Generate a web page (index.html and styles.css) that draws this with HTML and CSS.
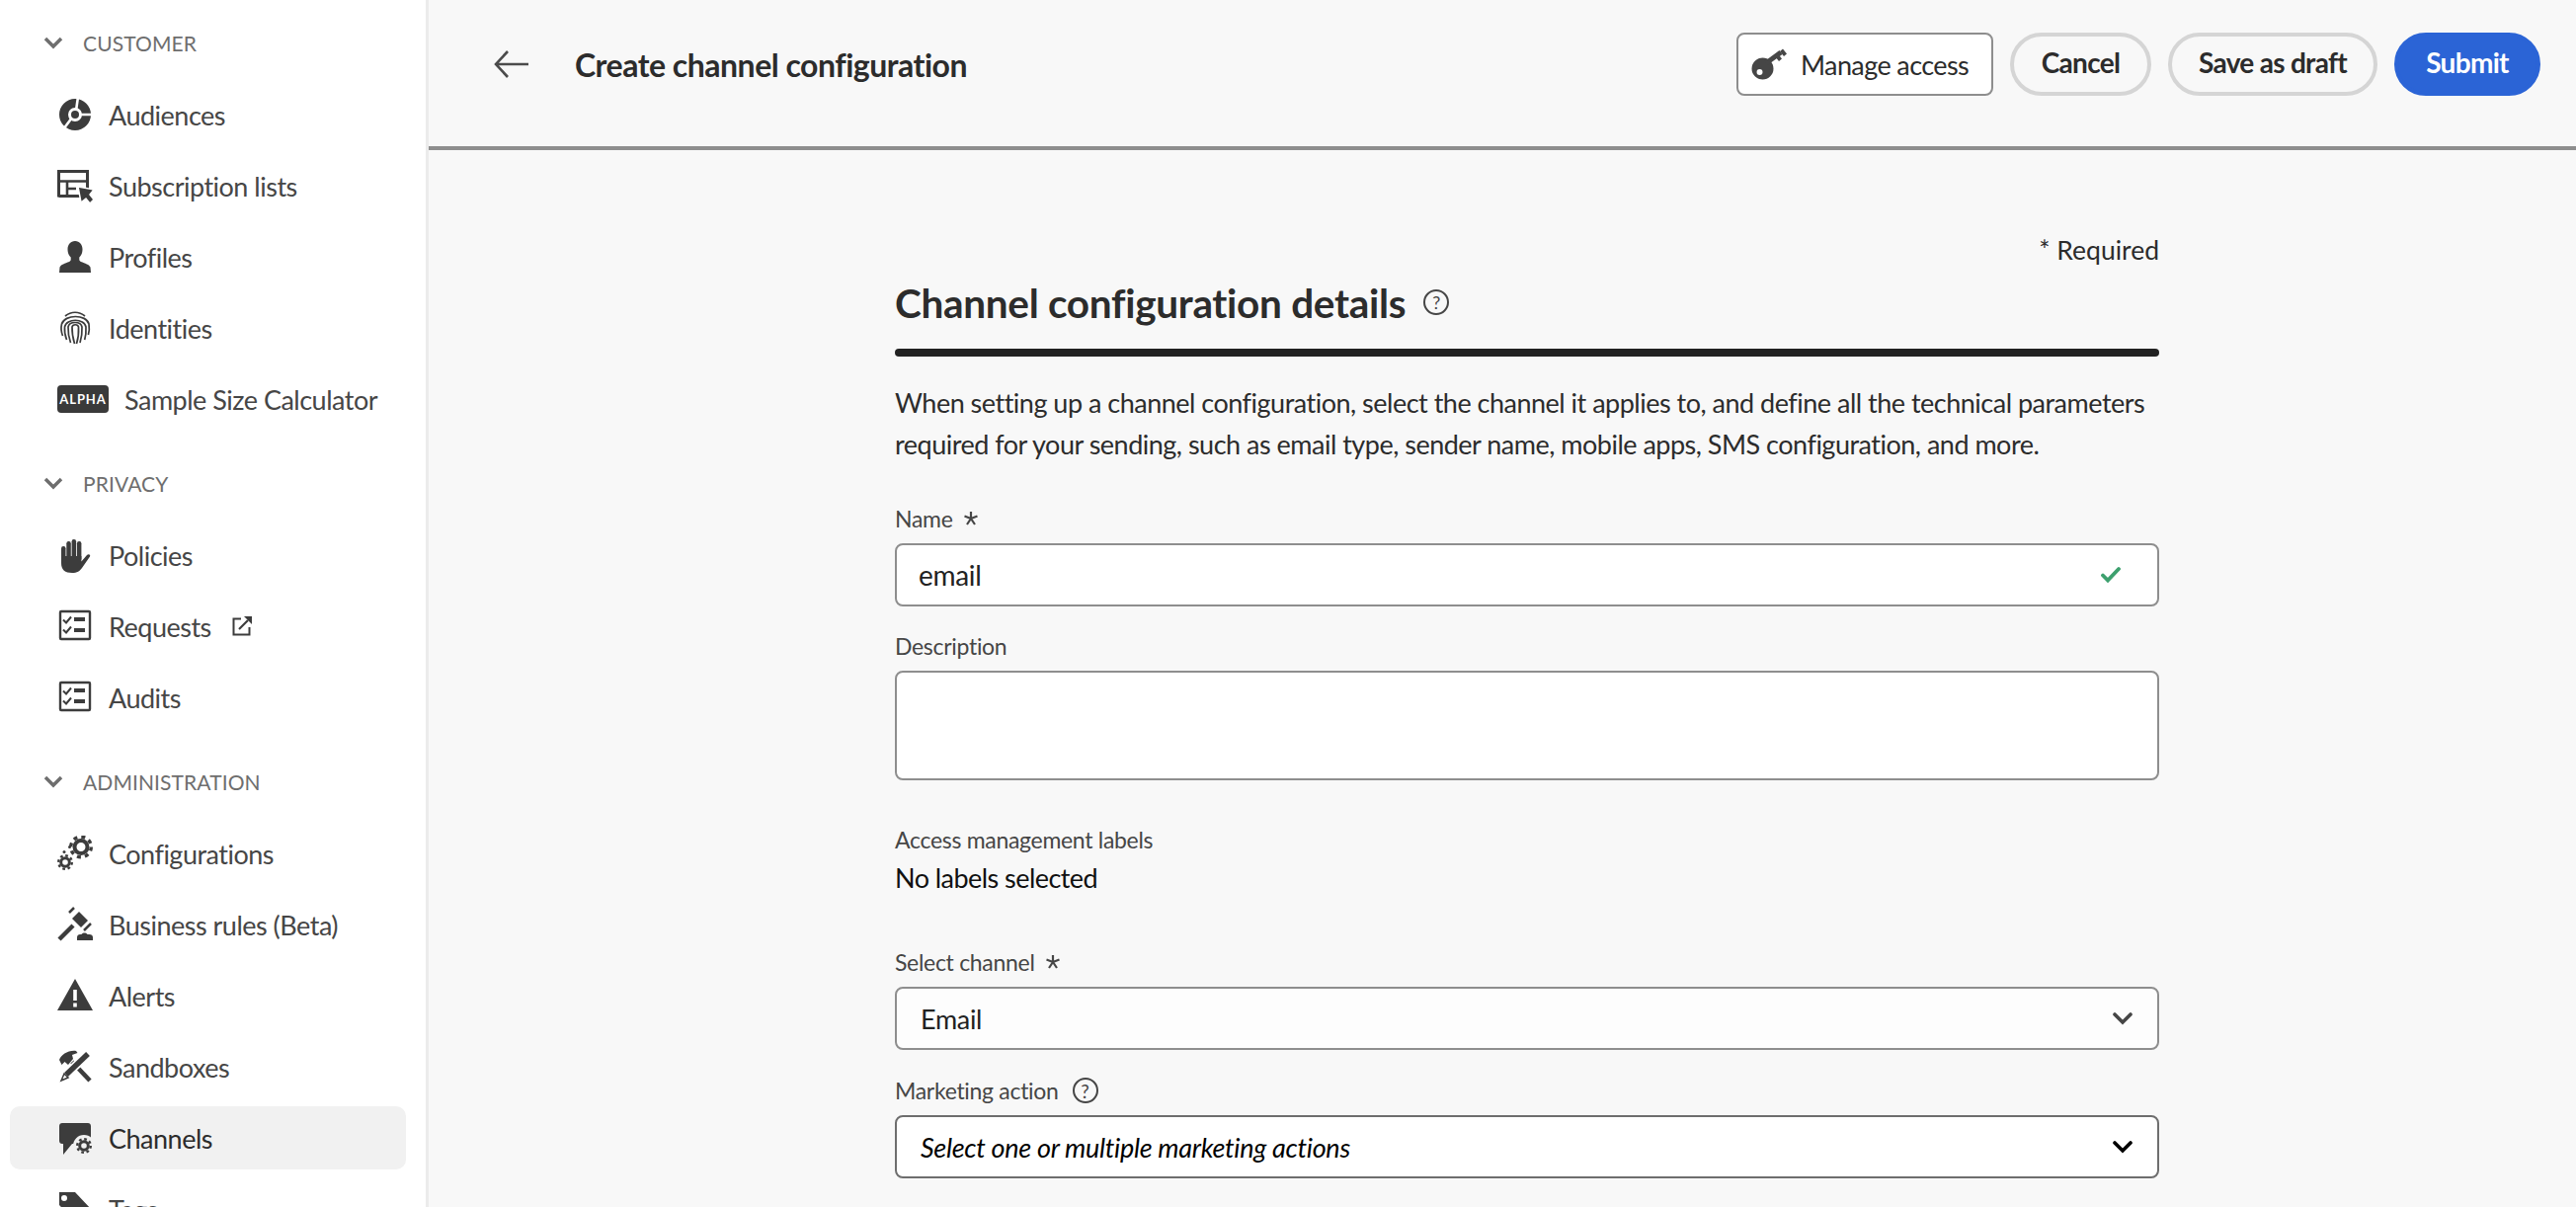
FILE: index.html
```html
<!DOCTYPE html>
<html lang="en">
<head>
  <meta charset="UTF-8">
  <title>Create channel configuration</title>
  <link rel="stylesheet" href="styles.css">
</head>
<body>
  <nav class="sidebar">
    <section class="nav-group">
      <div class="nav-title">
        <svg class="chevron" viewBox="0 0 20 14"><path d="M2 3l8 8 8-8"/></svg>
        <span>CUSTOMER</span>
      </div>
      <a class="nav-item">
        <svg class="nav-icon" viewBox="0 0 36 36">
          <circle cx="18" cy="18" r="11.5" fill="none" stroke="#3c3c3c" stroke-width="9"/>
          <path d="M19 14L21 0M22 18H36M15 21L6 33" stroke="#fff" stroke-width="2.6" fill="none"/>
          <circle cx="18" cy="18" r="4"/>
        </svg>
        <span>Audiences</span>
      </a>
      <a class="nav-item">
        <svg class="nav-icon" viewBox="0 0 36 36">
          <path d="M1.5 29.5V3.5h29v25h-29z" fill="none" stroke="#3c3c3c" stroke-width="3"/>
          <path d="M2 13.5h28M10 14v14M10 21h9" fill="none" stroke="#3c3c3c" stroke-width="2.6"/>
          <path d="M21 19l16 3-4 5 4 5-4 4-4-5-5 4z" stroke="#fff" stroke-width="1.5"/>
        </svg>
        <span>Subscription lists</span>
      </a>
      <a class="nav-item">
        <svg class="nav-icon" viewBox="0 0 36 36">
          <path d="M18 2c-4.6 0-7.5 3.6-7.5 8.6 0 3.3 1.3 6.2 3.2 8v2.2c0 1-.6 1.7-1.6 2.1-4.3 1.6-8.6 2.9-9.6 5.6L2 34h32l-.5-5.500c-1-2.700-5.300-4-9.600-5.600-1-.4-1.600-1.100-1.600-2.100v-2.200c1.900-1.800 3.200-4.700 3.200-8C25.500 5.600 22.600 2 18 2z"/>
        </svg>
        <span>Profiles</span>
      </a>
      <a class="nav-item">
        <svg class="nav-icon print" viewBox="0 0 36 36">
          <path d="M8 6c6-5 14-5 20 0"/>
          <path d="M5.500 26c-1.500-4-2-8-1-12 3-10 25-10 27.500 0 .6 4 .3 8-.6 11"/>
          <path d="M9.500 30c-1.500-4-2.500-8-2-13 1.500-9 20-9 21.500 0 .3 5-.2 9-1.300 13"/>
          <path d="M13.500 33c-1.500-4-2.700-10-2.500-16 1-6 13-6 14 0 .3 6-.4 11-2 16"/>
          <path d="M17.500 34c-1.500-5-2.700-11-2.500-17 .5-3 6-3 6.500 0 .3 6-.4 12-2 17"/>
        </svg>
        <span>Identities</span>
      </a>
      <a class="nav-item">
        <span class="badge">ALPHA</span>
        <span>Sample Size Calculator</span>
      </a>
    </section>

    <section class="nav-group">
      <div class="nav-title">
        <svg class="chevron" viewBox="0 0 20 14"><path d="M2 3l8 8 8-8"/></svg>
        <span>PRIVACY</span>
      </div>
      <a class="nav-item">
        <svg class="nav-icon" viewBox="0 0 36 36">
          <rect x="4" y="9" width="4.500" height="16" rx="2.200"/>
          <rect x="9.300" y="4" width="4.500" height="18" rx="2.200"/>
          <rect x="14.600" y="2" width="4.500" height="20" rx="2.200"/>
          <rect x="19.900" y="4" width="4.500" height="20" rx="2.200"/>
          <path d="M4 19h20.400v5.500l5.600-6.500c1.500-1.500 4-.5 3 1.500L25 31c-2 3-5 5-10 5-7 0-11-3-11-10z"/>
        </svg>
        <span>Policies</span>
      </a>
      <a class="nav-item">
        <svg class="nav-icon" viewBox="0 0 36 36">
          <rect x="3" y="3" width="30" height="28" rx="1" fill="none" stroke="#3c3c3c" stroke-width="2.400"/>
          <path d="M6 11.500l3 3 5-6M6 21.500l3 3 5-6" fill="none" stroke="#3c3c3c" stroke-width="2"/>
          <rect x="17" y="9" width="11" height="4"/>
          <rect x="17" y="20" width="11" height="4"/>
        </svg>
        <span>Requests</span>
        <svg class="external" viewBox="0 0 20 20">
          <path d="M9 2.500H1.500v16h16V11" fill="none" stroke="#3c3c3c" stroke-width="2"/>
          <path d="M7 13L16 4" fill="none" stroke="#3c3c3c" stroke-width="2.200"/>
          <path d="M12 0h8v8z"/>
        </svg>
      </a>
      <a class="nav-item">
        <svg class="nav-icon" viewBox="0 0 36 36">
          <rect x="3" y="3" width="30" height="28" rx="1" fill="none" stroke="#3c3c3c" stroke-width="2.400"/>
          <path d="M6 11.500l3 3 5-6M6 21.500l3 3 5-6" fill="none" stroke="#3c3c3c" stroke-width="2"/>
          <rect x="17" y="9" width="11" height="4"/>
          <rect x="17" y="20" width="11" height="4"/>
        </svg>
        <span>Audits</span>
      </a>
    </section>

    <section class="nav-group">
      <div class="nav-title">
        <svg class="chevron" viewBox="0 0 20 14"><path d="M2 3l8 8 8-8"/></svg>
        <span>ADMINISTRATION</span>
      </div>
      <a class="nav-item">
        <svg class="nav-icon" viewBox="0 0 36 36">
          <g fill="none" stroke="#3c3c3c">
            <circle cx="24" cy="11.500" r="6.500" stroke-width="4"/>
            <circle cx="24" cy="11.500" r="10.300" stroke-width="3.400" stroke-dasharray="4 4.090"/>
            <circle cx="8" cy="27" r="4.300" stroke-width="3"/>
            <circle cx="8" cy="27" r="6.800" stroke-width="2.400" stroke-dasharray="2.700 2.640"/>
          </g>
          <circle cx="7" cy="16.500" r="1.500"/>
          <circle cx="12.500" cy="11.500" r="1.500"/>
        </svg>
        <span>Configurations</span>
      </a>
      <a class="nav-item">
        <svg class="nav-icon" viewBox="0 0 36 36">
          <path d="M2 33l14-14" fill="none" stroke="#3c3c3c" stroke-width="4.500"/>
          <path d="M15 12l7-7 9 9-7 7z"/>
          <path d="M12 6l5-5M27 24l7-7" fill="none" stroke="#3c3c3c" stroke-width="2.500"/>
          <path d="M20 34v-3c0-2 1.500-3 3-3h1.500c1-2 5-2 6 0h2c2 0 3.500 1 3.500 3v3z"/>
        </svg>
        <span>Business rules (Beta)</span>
      </a>
      <a class="nav-item">
        <svg class="nav-icon" viewBox="0 0 36 36">
          <path d="M18 1l18 32H0z"/>
          <rect x="16.200" y="12" width="3.600" height="11" fill="#fff"/>
          <rect x="16.200" y="25.500" width="3.600" height="4" fill="#fff"/>
        </svg>
        <span>Alerts</span>
      </a>
      <a class="nav-item">
        <svg class="nav-icon" viewBox="0 0 36 36">
          <path d="M15 13l18 19" fill="none" stroke="#3c3c3c" stroke-width="4.500"/>
          <path d="M2 11c2-5 9-10 17-9l1.500 2-5.500 2 1 4-5 6-3.500-3-3 3z"/>
          <path d="M8 27L31 5" fill="none" stroke="#fff" stroke-width="9"/>
          <path d="M9 26L31 5" fill="none" stroke="#3c3c3c" stroke-width="5.500"/>
          <path d="M7 25l4 4-7 3z" fill="#fff" stroke="#3c3c3c" stroke-width="1.500"/>
        </svg>
        <span>Sandboxes</span>
      </a>
      <a class="nav-item active">
        <svg class="nav-icon" viewBox="0 0 36 36">
          <path d="M5 3h26c1.700 0 3 1.300 3 3v18H15l-9 11v-11H5c-1.700 0-3-1.300-3-3V6c0-1.700 1.300-3 3-3z"/>
          <circle cx="27" cy="26" r="11" fill="#f1f1f1"/>
          <g fill="none" stroke="#3c3c3c">
            <circle cx="27" cy="26" r="4.300" stroke-width="3"/>
            <circle cx="27" cy="26" r="6.800" stroke-width="2.400" stroke-dasharray="2.700 2.640"/>
          </g>
        </svg>
        <span>Channels</span>
      </a>
      <a class="nav-item">
        <svg class="nav-icon" viewBox="0 0 36 36">
          <path fill-rule="evenodd" d="M2 1h16l17 18-14 15L2 14zM7 4a3 3 0 1 0 0 6 3 3 0 0 0 0-6z"/>
        </svg>
        <span>Tags</span>
      </a>
    </section>
  </nav>

  <main class="main">
    <header class="topbar">
      <svg class="back" viewBox="0 0 36 30"><path d="M35 15H2M14 2L2 15l12 13"/></svg>
      <h1 class="page-title">Create channel configuration</h1>
      <div class="actions">
        <button class="btn-access">
          <svg class="key" viewBox="0 0 36 32">
            <path fill-rule="evenodd" d="M11.500 9.500a11 11 0 1 1 0 22 11 11 0 0 1 0-22zm-3 11.500a3 3 0 1 0 0 6 3 3 0 0 0 0-6z"/>
            <path d="M15 15L30 4" fill="none" stroke="#464646" stroke-width="5"/>
            <path d="M24 8l4 5 3-2.500-4-5zM29 3l4 5 3-2.500-4-5z"/>
          </svg>
          Manage access
        </button>
        <button class="btn btn-cancel">Cancel</button>
        <button class="btn btn-draft">Save as draft</button>
        <button class="btn btn-submit">Submit</button>
      </div>
    </header>

    <form class="form">
      <p class="required-note">* Required</p>
      <h2 class="form-title">Channel configuration details <span class="help help-small">?</span></h2>
      <div class="rule"></div>
      <p class="intro">When setting up a channel configuration, select the channel it applies to, and define all the technical parameters required for your sending, such as email type, sender name, mobile apps, SMS configuration, and more.</p>

      <div class="field field-name">
        <label class="label">Name
          <svg class="star" viewBox="0 0 14 14"><path d="M7 7V0M7 7l6.500-2.500M7 7L.5 4.500M7 7l4 6M7 7l-4 6"/></svg>
        </label>
        <div class="box">
          <span>email</span>
          <svg class="check" viewBox="0 0 20 18"><path d="M2 9.500l5 5L18 3"/></svg>
        </div>
      </div>

      <div class="field field-desc">
        <label class="label">Description</label>
        <div class="box box-area"></div>
      </div>

      <div class="access">
        <div class="label">Access management labels</div>
        <div class="access-value">No labels selected</div>
      </div>

      <div class="field field-channel">
        <label class="label">Select channel
          <svg class="star" viewBox="0 0 14 14"><path d="M7 7V0M7 7l6.500-2.500M7 7L.5 4.500M7 7l4 6M7 7l-4 6"/></svg>
        </label>
        <div class="box box-select">
          <span>Email</span>
          <svg class="select-arrow" viewBox="0 0 20 14"><path d="M2 3l8 8 8-8"/></svg>
        </div>
      </div>

      <div class="field field-action">
        <label class="label">Marketing action <span class="help">?</span></label>
        <div class="box box-select box-dark">
          <em>Select one or multiple marketing actions</em>
          <svg class="select-arrow" viewBox="0 0 20 14"><path d="M2 3l8 8 8-8"/></svg>
        </div>
      </div>
    </form>
  </main>
</body>
</html>
```

FILE: styles.css
```css
* {
  box-sizing: border-box;
}

html, body {
  height: 1222px;
  margin: 0;
  overflow: hidden;
}

body {
  display: flex;
  font-family: Lato, "Open Sans", sans-serif;
  background: #f8f8f8;
  color: #222;
}

/* sidebar */
.sidebar {
  width: 434px;
  height: 1222px;
  flex: none;
  padding-top: 7px;
  overflow: hidden;
  background: #fff;
  border-right: 3px solid #ebebeb;
}

.nav-group {
  padding-bottom: 9px;
}

.nav-title {
  display: flex;
  align-items: center;
  gap: 20px;
  height: 72px;
  margin-bottom: 5px;
  padding-left: 44px;
  font-size: 21px;
  letter-spacing: 0.1px;
  color: #6e6e6e;
}

.chevron {
  width: 20px;
  height: 14px;
  fill: none;
  stroke: #6e6e6e;
  stroke-width: 3.5;
}

.nav-item {
  display: flex;
  align-items: center;
  gap: 16px;
  width: 401px;
  height: 64px;
  margin: 0 0 8px 10px;
  padding-left: 48px;
  border-radius: 10px;
  font-size: 27px;
  letter-spacing: -0.5px;
  color: #464646;
}

.nav-item.active {
  background: #f1f1f1;
  color: #2c2c2c;
}

.nav-icon {
  width: 36px;
  height: 36px;
  flex: none;
  fill: #3c3c3c;
}

.print path {
  fill: none;
  stroke: #3c3c3c;
  stroke-width: 1.700;
}

.badge {
  width: 52px;
  height: 28px;
  flex: none;
  border-radius: 4px;
  background: #3a3a3a;
  color: #fff;
  font-size: 13px;
  font-weight: 700;
  letter-spacing: 0.9px;
  line-height: 29px;
  text-align: center;
}

.external {
  width: 20px;
  height: 20px;
  margin-left: 5px;
  fill: #3c3c3c;
}

/* top bar */
.main {
  flex: 1;
}

.topbar {
  display: flex;
  align-items: center;
  height: 152px;
  padding: 0 36px 18px 66px;
  border-bottom: 4px solid #8e8e8e;
}

.back {
  width: 36px;
  height: 30px;
  fill: none;
  stroke: #4b4b4b;
  stroke-width: 2.600;
}

.page-title {
  margin: 0 0 0 46px;
  font-size: 32px;
  font-weight: 700;
  letter-spacing: -0.5px;
  color: #2c2c2c;
}

.actions {
  display: flex;
  gap: 17px;
  margin-left: auto;
}

.btn-access {
  display: flex;
  align-items: center;
  gap: 14px;
  width: 260px;
  height: 64px;
  padding: 0 0 0 13px;
  border: 2px solid #8e8e8e;
  border-radius: 8px;
  background: #fff;
  color: #2c2c2c;
  font: inherit;
  font-size: 27px;
  letter-spacing: -0.6px;
}

.key {
  width: 36px;
  height: 32px;
  fill: #464646;
}

.btn {
  height: 64px;
  padding: 0 0 4px;
  border: 4px solid #d5d5d5;
  border-radius: 32px;
  background: transparent;
  color: #2c2c2c;
  font: inherit;
  font-size: 28px;
  font-weight: 700;
  letter-spacing: -0.7px;
}

.btn-cancel {
  width: 143px;
}

.btn-draft {
  width: 212px;
}

.btn-submit {
  width: 148px;
  border-color: #2b64d6;
  background: #2b64d6;
  color: #fff;
}

/* form */
.form {
  width: 1280px;
  margin-left: 472px;
}

.required-note {
  margin: 83px 0 0;
  font-size: 26.500px;
  line-height: 36px;
  text-align: right;
  color: #2c2c2c;
}

.form-title {
  display: flex;
  align-items: center;
  gap: 18px;
  height: 50px;
  margin: 10px 0 0;
  font-size: 40.500px;
  font-weight: 700;
  letter-spacing: -0.3px;
  color: #2c2c2c;
}

.rule {
  height: 8px;
  margin-top: 22px;
  border-radius: 4px;
  background: #222;
}

.intro {
  margin: 26px 0 0;
  font-size: 27px;
  line-height: 42px;
  letter-spacing: -0.5px;
  color: #2c2c2c;
}

.label {
  display: flex;
  align-items: center;
  height: 34px;
  font-size: 23px;
  letter-spacing: -0.3px;
  color: #464646;
}

.star {
  width: 14px;
  height: 14px;
  margin-left: 11px;
  fill: none;
  stroke: #464646;
  stroke-width: 2.200;
}

.help {
  display: inline-flex;
  align-items: center;
  justify-content: center;
  width: 26px;
  height: 26px;
  margin-left: 14px;
  border: 2px solid #464646;
  border-radius: 50%;
  font-size: 19px;
  font-weight: 400;
  letter-spacing: 0;
  color: #464646;
}

.help-small {
  margin-left: 0;
  font-size: 18px;
}

.field {
  display: flex;
  flex-direction: column;
  gap: 8px;
}

.field-name {
  margin-top: 37px;
}

.field-desc {
  margin-top: 23px;
}

.field-channel {
  margin-top: 50px;
}

.field-action {
  margin-top: 24px;
}

.box {
  display: flex;
  align-items: center;
  justify-content: space-between;
  height: 64px;
  padding: 0 37px 0 22px;
  border: 2px solid #8e8e8e;
  border-radius: 8px;
  background: #fff;
  font-size: 28px;
  letter-spacing: -0.3px;
  color: #222;
}

.box-area {
  height: 111px;
}

.box-select {
  padding: 0 25px 0 24px;
  font-size: 27px;
  background: #fdfdfd;
}

.box-dark {
  border-color: #6e6e6e;
  background: #fff;
  color: #000;
}

.check {
  width: 20px;
  height: 18px;
  fill: none;
  stroke: #3da06e;
  stroke-width: 3.800;
  stroke-linecap: round;
}

.select-arrow {
  width: 20px;
  height: 14px;
  fill: none;
  stroke: #464646;
  stroke-width: 3.600;
  stroke-linecap: round;
}

.box-dark .select-arrow {
  stroke: #000;
}

.access {
  margin-top: 44px;
}

.access .label {
  height: 32px;
}

.access-value {
  margin-top: 5px;
  font-size: 27px;
  line-height: 36px;
  letter-spacing: -0.55px;
  color: #111;
}
```
